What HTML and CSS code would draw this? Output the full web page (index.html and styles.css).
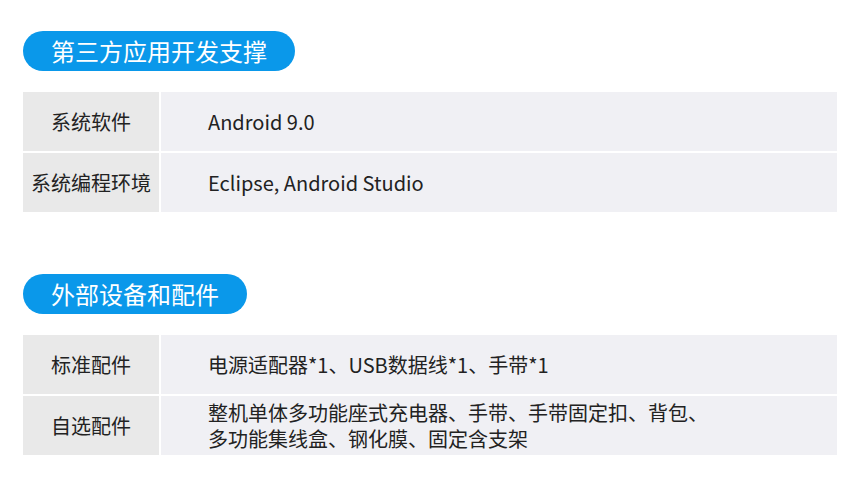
FILE: index.html
```html
<!DOCTYPE html>
<html lang="zh-CN">
<head>
  <meta charset="UTF-8">
  <title>第三方应用开发支撑</title>
  <link rel="stylesheet" href="styles.css">
</head>
<body>
  <div class="spec">
    <h2 class="pill">第三方应用开发支撑</h2>
    <div class="table">
      <div class="row">
        <div class="label">系统软件</div>
        <div class="value">Android 9.0</div>
      </div>
      <div class="row">
        <div class="label">系统编程环境</div>
        <div class="value">Eclipse, Android Studio</div>
      </div>
    </div>

    <h2 class="pill second">外部设备和配件</h2>
    <div class="table">
      <div class="row">
        <div class="label">标准配件</div>
        <div class="value">电源适配器*1、USB数据线*1、手带*1</div>
      </div>
      <div class="row">
        <div class="label">自选配件</div>
        <div class="value">整机单体多功能座式充电器、手带、手带固定扣、背包、<br>多功能集线盒、钢化膜、固定含支架</div>
      </div>
    </div>
  </div>
</body>
</html>
```

FILE: styles.css
```css
body {
  margin: 0;
  background-color: #fff;
  font-family: "Noto Sans CJK SC", "Noto Sans", sans-serif;
  color: #222;
}
.spec {
  padding: 31px 23px 0;
}
.pill {
  display: inline-block;
  margin: 0;
  height: 40px;
  line-height: 40px;
  padding: 0 28px;
  border-radius: 20px;
  background-color: #0a98ea;
  color: #fff;
  font-size: 24px;
  font-weight: 400;
}
.pill.second {
  margin-top: 62px;
}
.table {
  display: flex;
  flex-direction: column;
  gap: 2px;
  margin-top: 21px;
}
.row {
  display: flex;
  gap: 2px;
  height: 59px;
}
.label {
  width: 136px;
  flex-shrink: 0;
  display: flex;
  align-items: center;
  justify-content: center;
  background-color: #e9e9e9;
  font-size: 20px;
}
.value {
  flex: 1;
  display: flex;
  align-items: center;
  padding-left: 47px;
  background-color: #f0f0f4;
  font-size: 20px;
  line-height: 26px;
}
```
